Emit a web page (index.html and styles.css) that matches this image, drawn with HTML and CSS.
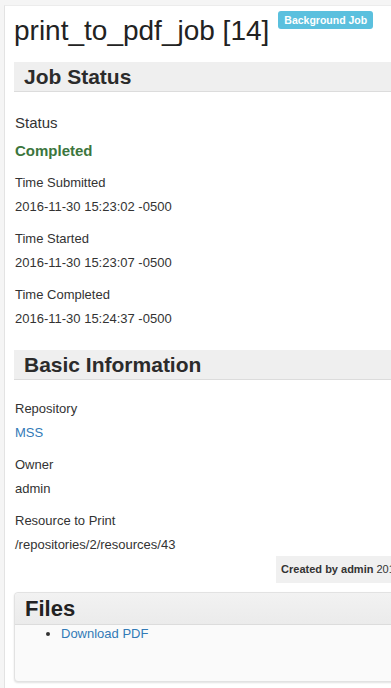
FILE: index.html
```html
<!DOCTYPE html>
<html lang="en">
<head>
  <meta charset="UTF-8">
  <meta name="viewport" content="width=device-width, initial-scale=1">
  <title>print_to_pdf_job [14]</title>
  <link rel="stylesheet" href="styles.css">
</head>
<body>
  <div class="panel">
    <div class="record-pane">
      <div class="title-row">
        <h1>print_to_pdf_job [14]</h1>
        <span class="badge">Background Job</span>
      </div>

      <section class="subrecord">
        <h3 class="subrecord-header">Job Status</h3>
        <div class="subrecord-body">
          <div class="field field-status">
            <div class="field-label">Status</div>
            <div class="field-value status-completed">Completed</div>
          </div>
          <div class="field">
            <div class="field-label">Time Submitted</div>
            <div class="field-value">2016-11-30 15:23:02 -0500</div>
          </div>
          <div class="field">
            <div class="field-label">Time Started</div>
            <div class="field-value">2016-11-30 15:23:07 -0500</div>
          </div>
          <div class="field">
            <div class="field-label">Time Completed</div>
            <div class="field-value">2016-11-30 15:24:37 -0500</div>
          </div>
        </div>
      </section>

      <section class="subrecord">
        <h3 class="subrecord-header">Basic Information</h3>
        <div class="subrecord-body basic">
          <div class="field">
            <div class="field-label">Repository</div>
            <div class="field-value"><a href="#">MSS</a></div>
          </div>
          <div class="field">
            <div class="field-label">Owner</div>
            <div class="field-value">admin</div>
          </div>
          <div class="field">
            <div class="field-label">Resource to Print</div>
            <div class="field-value">/repositories/2/resources/43</div>
          </div>
        </div>
      </section>

      <div class="record-footer">
        <span class="created-by"><strong>Created by admin</strong> 2016-11-30 15:23:02 -0500</span>
      </div>

      <section class="files-box">
        <h3 class="files-header">Files</h3>
        <ul class="files-list">
          <li><a href="#">Download PDF</a></li>
        </ul>
      </section>
    </div>
  </div>
</body>
</html>
```

FILE: styles.css
```css
body {
  margin: 0;
  padding: 5px 0 0 4px;
  background: #f5f5f5;
  font-family: "Liberation Sans", Arial, sans-serif;
  color: #333;
  overflow: hidden;
}

a {
  color: #337ab7;
  text-decoration: none;
}

.panel {
  width: 700px;
  min-height: 720px;
  background: #fff;
  border-left: 1px solid #e3e3e3;
  border-top: 1px solid #ececec;
  padding: 5px 0 20px 9px;
}

.record-pane {
  width: 500px;
}

.title-row {
  display: flex;
  align-items: flex-start;
  gap: 9px;
}

h1 {
  margin: 3px 0 0 0;
  font-size: 28px;
  line-height: 34px;
  font-weight: normal;
  color: #222;
}

.badge {
  background: #5bc0de;
  color: #fff;
  font-size: 10.5px;
  font-weight: bold;
  line-height: 18px;
  padding: 0 6px;
  border-radius: 3px;
}

.subrecord-header {
  margin: 0;
  padding: 0 10px;
  font-size: 21px;
  line-height: 29px;
  font-weight: bold;
  color: #2b2b2b;
  background: #efefef;
  border-bottom: 1px solid #dcdcdc;
}

.subrecord:first-of-type {
  margin-top: 14px;
}

.subrecord-body {
  padding: 20px 0 21px 1px;
}

.subrecord-body.basic {
  padding: 19px 0 0 1px;
}

.field {
  margin-bottom: 12px;
}

.field:last-child {
  margin-bottom: 0;
}

.field-label,
.field-value {
  font-size: 13px;
  line-height: 20px;
}

.field-label {
  margin-bottom: 4px;
}

.field-status .field-label {
  font-size: 15px;
  line-height: 22px;
  margin-bottom: 6px;
}

.field-status {
  margin-bottom: 11px;
}

.status-completed {
  font-size: 15px;
  line-height: 22px;
  font-weight: bold;
  color: #3c763d;
}

.record-footer {
  display: flex;
  justify-content: flex-end;
  margin-top: 1px;
}

.created-by {
  background: #f0f0f0;
  font-size: 11px;
  line-height: 17px;
  padding: 5px;
  white-space: nowrap;
}

.files-box {
  margin-top: 9px;
  border: 1px solid #e2e2e2;
  border-radius: 4px;
  background: #fafafa;
  box-shadow: 0 1px 2px rgba(0, 0, 0, 0.12);
  min-height: 88px;
}

.files-header {
  margin: 0;
  padding: 0 10px;
  font-size: 22px;
  line-height: 31px;
  font-weight: bold;
  color: #222;
  background: linear-gradient(to bottom, #f2f2f2, #ebebeb);
  border-bottom: 1px solid #dcdcdc;
  border-radius: 4px 4px 0 0;
}

.files-list {
  margin: 0;
  padding: 0 0 0 46px;
  font-size: 13px;
  line-height: 18px;
}
```
